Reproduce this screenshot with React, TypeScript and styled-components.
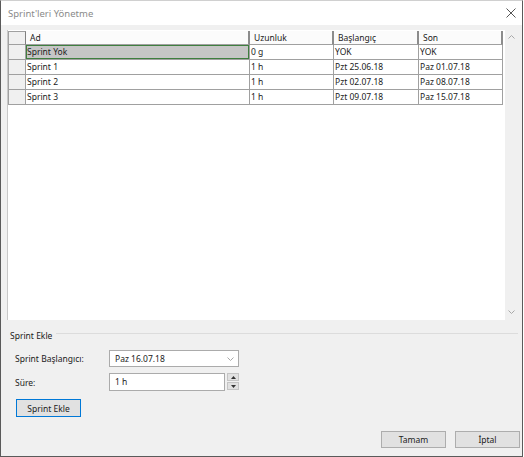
import styled, { createGlobalStyle } from "styled-components";

const GlobalStyle = createGlobalStyle`
  body {
    margin: 0;
    background: #ffffff;
    font-family: "Noto Sans", "Liberation Sans", sans-serif;
  }
`;

interface SprintRow {
  name: string;
  length: string;
  start: string;
  end: string;
}

const sprints: SprintRow[] = [
  { name: "Sprint Yok", length: "0 g", start: "YOK", end: "YOK" },
  { name: "Sprint 1", length: "1 h", start: "Pzt 25.06.18", end: "Paz 01.07.18" },
  { name: "Sprint 2", length: "1 h", start: "Pzt 02.07.18", end: "Paz 08.07.18" },
  { name: "Sprint 3", length: "1 h", start: "Pzt 09.07.18", end: "Paz 15.07.18" },
];

const COLUMNS = "18px 224px 84px 85px 84px";

const Window = styled.div`
  width: 521px;
  height: 455px;
  border: 1px solid #5a5a5a;
  border-top-color: #d0d0d0;
  background: #f0f0f0;
  display: flex;
  flex-direction: column;
  font-size: 8.5px;
  color: #222;
`;

const TitleBar = styled.div`
  height: 24px;
  flex-shrink: 0;
  background: #ffffff;
  display: flex;
  align-items: center;
  justify-content: space-between;
  padding: 0 6px 0 7px;
  color: #8a8a8a;
  font-size: 9.5px;
`;

const Body = styled.div`
  flex: 1;
  display: flex;
  flex-direction: column;
  padding: 5px 4px 7px 6px;
`;

const GridPanel = styled.div`
  height: 290px;
  flex-shrink: 0;
  background: #ffffff;
  border-left: 1px solid #c8c8c8;
  display: flex;
`;

const GridArea = styled.div`
  flex: 1;
  padding-top: 1px;
`;

const GridRow = styled.div`
  display: grid;
  grid-template-columns: ${COLUMNS};
  height: 15px;
`;

const HeaderRow = styled(GridRow)`
  height: 14px;
`;

const CornerCell = styled.div`
  background: #f0f0f0;
  border: 1px solid #a0a0a0;
  border-right-color: #808080;
  box-sizing: border-box;
`;

const HeaderCell = styled.div`
  background: #fbfbfb;
  border-bottom: 1px solid #a0a0a0;
  border-right: 2px solid #8c8c8c;
  box-sizing: border-box;
  padding-left: 4px;
  line-height: 13px;
  white-space: nowrap;
  overflow: hidden;
`;

const RowHeader = styled.div`
  background: #f0f0f0;
  border: 1px solid #a0a0a0;
  border-top: none;
  box-sizing: border-box;
`;

const Cell = styled.div<{ $selected?: boolean }>`
  background: ${(p) => (p.$selected ? "#c6c6c6" : "#ffffff")};
  border-right: 1px solid #a0a0a0;
  border-bottom: 1px solid #a0a0a0;
  box-sizing: border-box;
  padding-left: 1px;
  line-height: 14px;
  white-space: nowrap;
  overflow: hidden;
  ${(p) => p.$selected && "box-shadow: inset 0 0 0 1px #3f7f3f;"}
`;

const ScrollBar = styled.div`
  width: 13px;
  background: #f0f0f0;
  display: flex;
  flex-direction: column;
  justify-content: space-between;
  align-items: center;
  padding: 5px 0 6px;
  box-sizing: border-box;
`;

const GroupHeader = styled.div`
  display: flex;
  align-items: center;
  gap: 4px;
  margin-top: 9px;
  padding-left: 3px;
  height: 12px;
  color: #1a1a1a;
`;

const GroupLine = styled.div`
  flex: 1;
  border-top: 1px solid #dcdcdc;
  margin-top: -3px;
`;

const FormGrid = styled.div`
  display: grid;
  grid-template-columns: 94px 130px;
  row-gap: 6px;
  margin-top: 9px;
  padding-left: 8px;
  align-items: center;
`;

const FieldLabel = styled.div`
  color: #1a1a1a;
`;

const ComboBox = styled.div`
  height: 17px;
  background: #ffffff;
  border: 1px solid #ababab;
  box-sizing: border-box;
  display: flex;
  align-items: center;
  justify-content: space-between;
  padding: 0 4px 0 5px;
`;

const SpinRow = styled.div`
  display: flex;
  gap: 2px;
`;

const SpinInput = styled.div`
  width: 116px;
  height: 18px;
  background: #ffffff;
  border: 1px solid #ababab;
  box-sizing: border-box;
  padding-left: 5px;
  line-height: 16px;
`;

const SpinButtons = styled.div`
  width: 12px;
  height: 17px;
  display: flex;
  flex-direction: column;
  gap: 1px;
`;

const SpinButton = styled.div`
  flex: 1;
  background: #e1e1e1;
  border: 1px solid #c4c4c4;
  box-sizing: border-box;
  display: flex;
  align-items: center;
  justify-content: center;
`;

const PushButton = styled.button<{ $focused?: boolean }>`
  width: 65px;
  height: 17px;
  padding: 0;
  background: #e1e1e1;
  border: 1px solid ${(p) => (p.$focused ? "#0078d7" : "#adadad")};
  font-family: inherit;
  font-size: 8.5px;
  color: #222;
`;

const AddButton = styled(PushButton)`
  height: 18px;
  margin: 8px 0 0 9px;
`;

const Footer = styled.div`
  margin-top: auto;
  margin-right: -2px;
  margin-bottom: 1px;
  display: flex;
  justify-content: flex-end;
  gap: 9px;
`;

const Chevron = ({ up }: { up?: boolean }) => (
  <svg width="7" height="4" viewBox="0 0 7 4">
    <path
      d={up ? "M0.5 3.5 L3.5 0.5 L6.5 3.5" : "M0.5 0.5 L3.5 3.5 L6.5 0.5"}
      fill="none"
      stroke="#a8a8a8"
      strokeWidth="1"
    />
  </svg>
);

const Triangle = ({ up }: { up?: boolean }) => (
  <svg width="5" height="3" viewBox="0 0 5 3">
    <path d={up ? "M0 3 L2.5 0 L5 3 Z" : "M0 0 L2.5 3 L5 0 Z"} fill="#333" />
  </svg>
);

export default function App() {
  return (
    <>
      <GlobalStyle />
      <Window>
        <TitleBar>
          <span>Sprint'leri Yönetme</span>
          <svg width="10" height="10" viewBox="0 0 10 10">
            <path d="M0.5 0.5 L9.5 9.5 M9.5 0.5 L0.5 9.5" stroke="#555" strokeWidth="1" />
          </svg>
        </TitleBar>
        <Body>
          <GridPanel>
            <GridArea>
              <HeaderRow>
                <CornerCell />
                <HeaderCell>Ad</HeaderCell>
                <HeaderCell>Uzunluk</HeaderCell>
                <HeaderCell>Başlangıç</HeaderCell>
                <HeaderCell>Son</HeaderCell>
              </HeaderRow>
              {sprints.map((s, i) => (
                <GridRow key={s.name}>
                  <RowHeader />
                  <Cell $selected={i === 0}>{s.name}</Cell>
                  <Cell>{s.length}</Cell>
                  <Cell>{s.start}</Cell>
                  <Cell>{s.end}</Cell>
                </GridRow>
              ))}
            </GridArea>
            <ScrollBar>
              <Chevron up />
              <Chevron />
            </ScrollBar>
          </GridPanel>

          <GroupHeader>
            <span>Sprint Ekle</span>
            <GroupLine />
          </GroupHeader>
          <FormGrid>
            <FieldLabel>Sprint Başlangıcı:</FieldLabel>
            <ComboBox>
              <span>Paz 16.07.18</span>
              <Chevron />
            </ComboBox>
            <FieldLabel>Süre:</FieldLabel>
            <SpinRow>
              <SpinInput>1 h</SpinInput>
              <SpinButtons>
                <SpinButton>
                  <Triangle up />
                </SpinButton>
                <SpinButton>
                  <Triangle />
                </SpinButton>
              </SpinButtons>
            </SpinRow>
          </FormGrid>
          <AddButton $focused>Sprint Ekle</AddButton>

          <Footer>
            <PushButton>Tamam</PushButton>
            <PushButton>İptal</PushButton>
          </Footer>
        </Body>
      </Window>
    </>
  );
}
